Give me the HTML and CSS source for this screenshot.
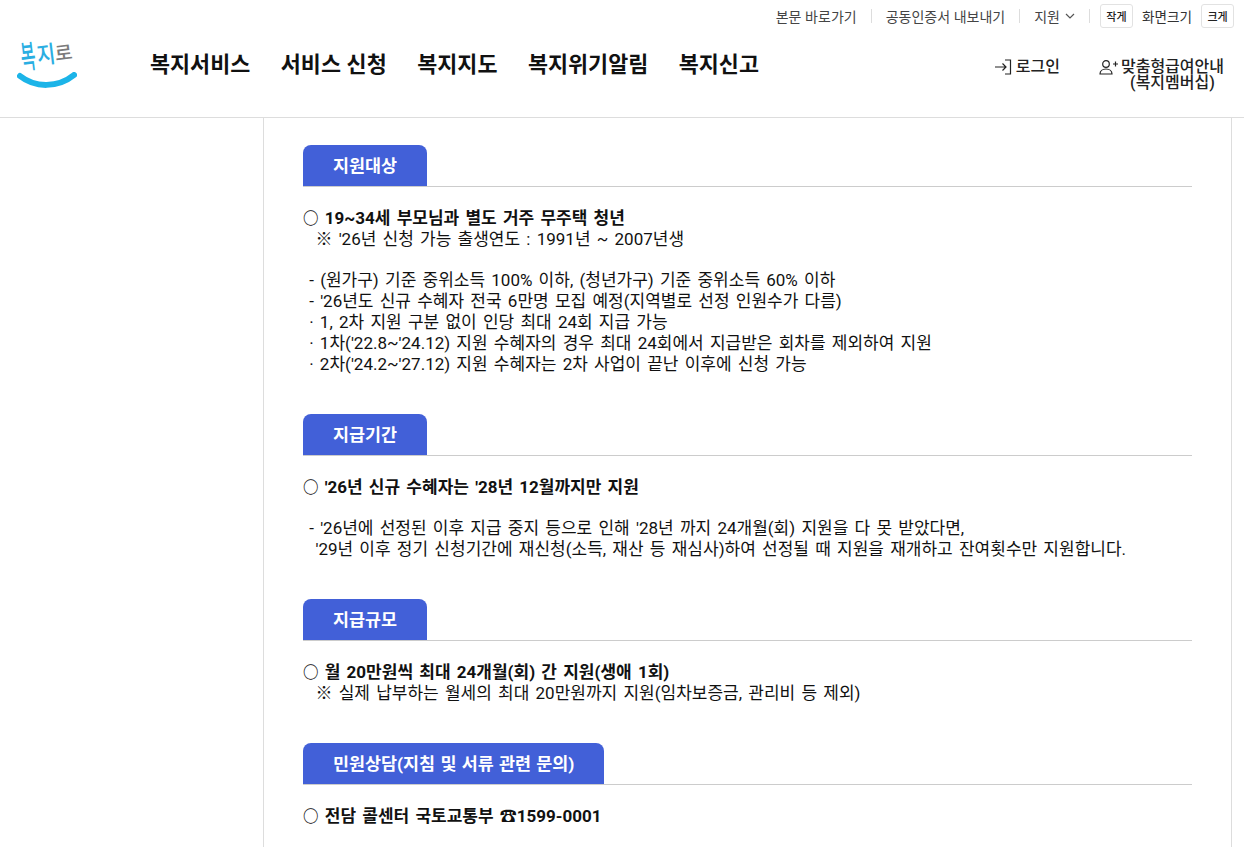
FILE: index.html
```html
<!DOCTYPE html>
<html lang="ko">
<head>
    <meta charset="UTF-8">
    <title>복지로</title>
    <link rel="stylesheet" href="styles.css">
</head>
<body>
    <header class="header">
        <div class="util">
            <a class="util-link">본문 바로가기</a>
            <span class="util-sep"></span>
            <a class="util-link">공동인증서 내보내기</a>
            <span class="util-sep"></span>
            <a class="util-link">지원
                <svg class="chev" width="10" height="6" viewBox="0 0 10 6"><path d="M1 1l4 4 4-4" fill="none" stroke="#555" stroke-width="1.2"/></svg>
            </a>
            <span class="util-sep util-sep-last"></span>
            <button class="size-btn">작게</button>
            <span class="size-label">화면크기</span>
            <button class="size-btn">크게</button>
        </div>
        <div class="main-bar">
            <a class="logo">
                <span class="logo-text"><span class="logo-bok">복</span><span class="logo-ji">지</span><span class="logo-ro">로</span></span>
                <svg class="logo-smile" width="60" height="18" viewBox="0 0 60 18"><path d="M3 4c15 12 38 12 54-1" fill="none" stroke="#1cb4e8" stroke-width="6" stroke-linecap="round"/></svg>
            </a>
            <nav class="gnb">
                <a>복지서비스</a>
                <a>서비스 신청</a>
                <a>복지지도</a>
                <a>복지위기알림</a>
                <a>복지신고</a>
            </nav>
            <div class="member">
                <a class="login">
                    <svg width="18" height="16" viewBox="0 0 18 16"><path d="M1 8h11M8.500 4.500L12 8l-3.500 3.500M11 1h5.500v14H11" fill="none" stroke="#222" stroke-width="1.200"/></svg>
                    로그인
                </a>
                <a class="guide">
                    <svg width="19" height="16" viewBox="0 0 19 16"><circle cx="7" cy="5" r="3.300" fill="none" stroke="#222" stroke-width="1.200"/><path d="M1 15c0-3 2.500-5 6-5s6 2 6 5zM14 5h5M16.500 2.500v5" fill="none" stroke="#222" stroke-width="1.200"/></svg>
                    <span class="guide-text">맞춤형급여안내<br>(복지멤버십)</span>
                </a>
            </div>
        </div>
    </header>

    <main class="content">
        <section class="block">
            <div class="tab-row"><h2 class="tab">지원대상</h2></div>
            <div class="text">
                <p><strong><span class="bullet">○</span> 19~34세 부모님과 별도 거주 무주택 청년</strong></p>
                <p>&nbsp; ※ '26년 신청 가능 출생연도 : 1991년 ~ 2007년생</p>
                <p>&nbsp;</p>
                <p>&nbsp;- (원가구) 기준 중위소득 100% 이하, (청년가구) 기준 중위소득 60% 이하</p>
                <p>&nbsp;- '26년도 신규 수혜자 전국 6만명 모집 예정(지역별로 선정 인원수가 다름)</p>
                <p>&nbsp;· 1, 2차 지원 구분 없이 인당 최대 24회 지급 가능</p>
                <p>&nbsp;· 1차('22.8~'24.12) 지원 수혜자의 경우 최대 24회에서 지급받은 회차를 제외하여 지원</p>
                <p>&nbsp;· 2차('24.2~'27.12) 지원 수혜자는 2차 사업이 끝난 이후에 신청 가능</p>
            </div>
        </section>

        <section class="block">
            <div class="tab-row"><h2 class="tab">지급기간</h2></div>
            <div class="text">
                <p><strong><span class="bullet">○</span> '26년 신규 수혜자는 '28년 12월까지만 지원</strong></p>
                <p>&nbsp;</p>
                <p>&nbsp;- '26년에 선정된 이후 지급 중지 등으로 인해 '28년 까지 24개월(회) 지원을 다 못 받았다면,</p>
                <p>&nbsp; '29년 이후 정기 신청기간에 재신청(소득, 재산 등 재심사)하여 선정될 때 지원을 재개하고 잔여횟수만 지원합니다.</p>
            </div>
        </section>

        <section class="block">
            <div class="tab-row"><h2 class="tab">지급규모</h2></div>
            <div class="text">
                <p><strong><span class="bullet">○</span> 월 20만원씩 최대 24개월(회) 간 지원(생애 1회)</strong></p>
                <p>&nbsp; ※ 실제 납부하는 월세의 최대 20만원까지 지원(임차보증금, 관리비 등 제외)</p>
            </div>
        </section>

        <section class="block">
            <div class="tab-row"><h2 class="tab">민원상담(지침 및 서류 관련 문의)</h2></div>
            <div class="text">
                <p><strong><span class="bullet">○</span> 전담 콜센터 국토교통부 ☎1599-0001</strong></p>
            </div>
        </section>
    </main>
</body>
</html>
```

FILE: styles.css
```css
html, body {
    height: 847px;
    overflow: hidden;
}
body {
    margin: 0;
    background: #fff;
    color: #111;
    font-family: "Noto Sans", "Noto Sans CJK KR", sans-serif;
}
p, h2 {
    margin: 0;
}
.header {
    height: 117px;
    border-bottom: 1px solid #ddd;
}
.util {
    display: flex;
    justify-content: flex-end;
    align-items: center;
    height: 32px;
    padding-right: 10px;
    font-size: 14px;
    color: #444;
}
.util-link {
    display: flex;
    align-items: center;
    gap: 5px;
}
.util-sep {
    width: 1px;
    height: 14px;
    background: #ddd;
    margin: 0 14px;
}
.util-sep-last {
    margin-right: 10px;
}
.size-btn {
    width: 33px;
    height: 24px;
    padding: 0;
    border: 1px solid #e2e2e2;
    border-radius: 3px;
    background: #fff;
    color: #222;
    font: 500 11px "Noto Sans CJK KR", sans-serif;
}
.size-label {
    margin: 0 9px;
    color: #333;
    font-size: 13.600px;
}
.main-bar {
    display: flex;
    height: 85px;
}
.logo {
    width: 133px;
    padding-left: 17px;
    flex: none;
    position: relative;
}
.logo-text {
    position: absolute;
    left: 19px;
    top: 12px;
    display: flex;
    align-items: center;
    color: #2aaee2;
    font-size: 20px;
    font-weight: 500;
    line-height: 22px;
    transform: rotate(-7deg);
}
.logo-bok {
    display: block;
    width: 18px;
    transform: scale(0.800, 1.600);
}
.logo-ji {
    display: block;
    width: 18px;
    transform: scaleY(1.200);
}
.logo-ro {
    display: block;
    width: 16px;
    font-size: 19px;
    color: #7b7b7b;
}
.logo-smile {
    position: absolute;
    left: 17px;
    top: 40px;
}
.gnb {
    display: flex;
    gap: 30.500px;
    padding-top: 17px;
    font-size: 21.800px;
    font-weight: 700;
    line-height: 30px;
    color: #111;
}
.member {
    margin-left: auto;
    display: flex;
    gap: 39px;
    padding: 27px 20px 0 0;
    font-family: Roboto, "Noto Sans CJK KR", sans-serif;
    font-size: 16px;
    font-weight: 500;
    line-height: 16px;
    color: #222;
}
.login, .guide {
    display: flex;
    align-items: flex-start;
    gap: 4px;
}
.guide {
    gap: 3px;
}
.guide-text {
    text-align: center;
}
.content {
    box-sizing: border-box;
    margin-left: 263px;
    width: 969px;
    height: 729px;
    padding: 27px 39px 0;
    border-left: 1px solid #ddd;
    border-right: 1px solid #ddd;
    font-family: Roboto, "Noto Sans CJK KR", sans-serif;
}
.block {
    margin-bottom: 39.400px;
}
.tab-row {
    display: flex;
    border-bottom: 1px solid #ccc;
}
.tab {
    padding: 0 30px;
    height: 41px;
    line-height: 42px;
    background: #4260d8;
    border-radius: 8px 8px 0 0;
    color: #fff;
    font-size: 17.400px;
    font-weight: 700;
    word-spacing: 1px;
}
.text {
    margin-top: 21px;
    font-size: 17px;
    line-height: 20.800px;
    word-spacing: 2px;
}
.text strong {
    font-weight: 700;
}
.bullet {
    font-size: 15.500px;
    line-height: 1;
}
```
